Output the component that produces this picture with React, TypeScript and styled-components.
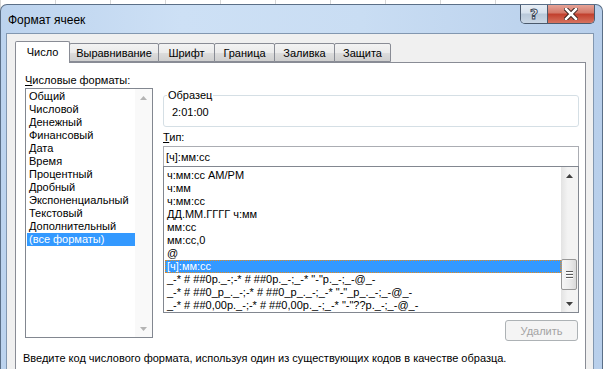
import React from "react";
import styled, { createGlobalStyle } from "styled-components";

const GlobalStyle = createGlobalStyle`
  html, body {
    margin: 0;
    padding: 0;
    overflow: hidden;
  }
  body {
    width: 605px;
    height: 369px;
    font-family: "Liberation Sans", Arial, sans-serif;
    font-size: 11px;
    color: #000;
    background: #fff
      repeating-linear-gradient(90deg, transparent 0 54px, #d6d6d6 54px 55px);
    background-position: 1px 0;
  }
`;

const Window = styled.div`
  margin-top: 4px;
  width: 603px;
  height: 365px;
  box-sizing: border-box;
  border: 1px solid #5b6f87;
  border-bottom: none;
  border-radius: 7px 7px 0 0;
  background: linear-gradient(
    90deg,
    #bcd3ee 0%,
    #cde0f5 30%,
    #c9ddf3 60%,
    #b8cfeb 100%
  );
  display: flex;
  flex-direction: column;
  overflow: hidden;
`;

const TitleBar = styled.div`
  height: 28px;
  flex: none;
  display: flex;
  align-items: center;
  padding-left: 7px;
`;

const Caption = styled.div`
  flex: 1;
  font-size: 12px;
  color: #000;
  padding-top: 1px;
`;

const CaptionButtons = styled.div`
  align-self: flex-start;
  margin-top: -1px;
  margin-right: 7px;
  display: flex;
  height: 19px;
  border: 1px solid #4b5a6d;
  border-top: none;
  border-radius: 0 0 5px 5px;
  overflow: hidden;
`;

const CaptionButton = styled.div<{ $close?: boolean; $w: number }>`
  width: ${(p) => p.$w}px;
  display: flex;
  align-items: center;
  justify-content: center;
  background: ${(p) =>
    p.$close
      ? "linear-gradient(180deg, #e8a89c 0%, #d47a6b 45%, #c2412f 55%, #d7735f 100%)"
      : "linear-gradient(180deg, #e9eff6 0%, #d7e2ee 45%, #b9c9da 55%, #cbd8e6 100%)"};
  & + & {
    border-left: 1px solid #4b5a6d;
  }
`;

const HelpGlyph = styled.span`
  font-family: "DejaVu Sans", sans-serif;
  font-weight: bold;
  font-size: 14px;
  color: #fff;
  -webkit-text-stroke: 1px #3d4a5a;
  line-height: 1;
`;

const Client = styled.div`
  flex: 1;
  margin: 0 8px 0 5px;
  background: #f0f0f0;
  border: 1px solid #8297b0;
  border-bottom: none;
  padding: 7px 7px 0 8px;
  display: flex;
  flex-direction: column;
`;

const TabStrip = styled.div`
  display: flex;
  align-items: flex-end;
  height: 21px;
  position: relative;
  z-index: 1;
`;

const Tab = styled.div<{ $active?: boolean; $w: number }>`
  width: ${(p) => p.$w}px;
  box-sizing: border-box;
  height: ${(p) => (p.$active ? 22 : 19)}px;
  margin-bottom: ${(p) => (p.$active ? -1 : 0)}px;
  border: 1px solid #898c95;
  border-bottom: ${(p) => (p.$active ? "none" : "1px solid #898c95")};
  border-radius: 2px 2px 0 0;
  background: ${(p) =>
    p.$active
      ? "#fff"
      : "linear-gradient(180deg, #f3f3f3 0%, #ebebeb 50%, #dddddd 51%, #cfcfcf 100%)"};
  display: flex;
  align-items: center;
  justify-content: center;
  padding-bottom: ${(p) => (p.$active ? 2 : 0)}px;
  & + & {
    margin-left: -1px;
  }
`;

const TabPanel = styled.div`
  flex: 1;
  border: 1px solid #898c95;
  border-bottom: none;
  background: #fff;
  padding: 11px 6px 0 9px;
  display: flex;
  flex-direction: column;
`;

const Columns = styled.div`
  display: flex;
  gap: 10px;
  align-items: flex-start;
`;

const LeftColumn = styled.div`
  width: 128px;
  display: flex;
  flex-direction: column;
`;

const RightColumn = styled.div`
  width: 416px;
  display: flex;
  flex-direction: column;
  padding-top: 15px;
`;

const Label = styled.div`
  height: 13px;
  line-height: 13px;
  margin-bottom: 1px;
`;

const ListBox = styled.div<{ $h: number }>`
  height: ${(p) => p.$h}px;
  box-sizing: border-box;
  border: 1px solid #828790;
  background: #fff;
  display: flex;
  overflow: hidden;
`;

const Items = styled.div<{ $pt: number }>`
  flex: 1;
  min-width: 0;
  padding: ${(p) => p.$pt}px 0 0 1px;
  overflow: hidden;
`;

const Item = styled.div<{ $selected?: boolean; $focus?: boolean }>`
  height: 13px;
  line-height: 13px;
  padding-left: 2px;
  white-space: nowrap;
  box-sizing: border-box;
  background: ${(p) => (p.$selected ? "#3399ff" : "transparent")};
  color: ${(p) => (p.$selected ? "#fff" : "#000")};
  outline: ${(p) => (p.$focus ? "1px dotted #e98b1a" : "none")};
  outline-offset: -1px;
`;

const ScrollBar = styled.div<{ $disabled?: boolean }>`
  width: 17px;
  flex: none;
  display: flex;
  flex-direction: column;
  background: ${(p) =>
    p.$disabled ? "#f9f9f9" : "linear-gradient(90deg, #e3e3e3 0%, #f3f3f3 40%, #f3f3f3 100%)"};
`;

const ArrowButton = styled.div`
  height: 17px;
  flex: none;
  display: flex;
  align-items: center;
  justify-content: center;
`;

const Track = styled.div`
  flex: 1;
  display: flex;
  flex-direction: column;
`;

const Thumb = styled.div<{ $top: number; $h: number }>`
  margin: ${(p) => p.$top}px 1px 0 0;
  height: ${(p) => p.$h}px;
  box-sizing: border-box;
  border: 1px solid #979797;
  border-radius: 2px;
  background: linear-gradient(90deg, #f5f5f5 0%, #ececec 50%, #dadada 100%);
  display: flex;
  flex-direction: column;
  align-items: center;
  justify-content: center;
  gap: 2px;
`;

const Grip = styled.div`
  width: 7px;
  height: 1px;
  background: #5a5a5a;
  box-shadow: 0 1px 0 #fff;
`;

const SampleBox = styled.fieldset`
  margin: 0;
  padding: 0 0 3px 8px;
  height: 38px;
  box-sizing: border-box;
  border: 1px solid #d5dfe5;
  border-radius: 3px;
`;

const Legend = styled.legend`
  padding: 0 1px;
  margin-left: -5px;
  line-height: 13px;
`;

const SampleValue = styled.div`
  margin-top: 4px;
  line-height: 13px;
`;

const TypeLabel = styled(Label)`
  margin-top: 4px;
  margin-bottom: 2px;
`;

const TextInput = styled.div`
  height: 20px;
  box-sizing: border-box;
  border: 1px solid #abadb3;
  border-bottom: none;
  padding-left: 2px;
  display: flex;
  align-items: center;
  background: #fff;
`;

const DeleteButton = styled.div`
  align-self: flex-end;
  margin: 7px 1px 0 0;
  width: 73px;
  height: 21px;
  box-sizing: border-box;
  border: 1px solid #adb2b5;
  border-radius: 3px;
  background: #f4f4f4;
  color: #a3a3a3;
  display: flex;
  align-items: center;
  justify-content: center;
`;

const Hint = styled.div`
  margin: 11px 0 0 -2px;
  line-height: 13px;
  white-space: nowrap;
`;

const Arrow = ({ up, color }: { up?: boolean; color: string }) => (
  <svg width="7" height="4" viewBox="0 0 7 4">
    <polygon points={up ? "0,4 7,4 3.5,0" : "0,0 7,0 3.5,4"} fill={color} />
  </svg>
);

const formats = [
  "Общий",
  "Числовой",
  "Денежный",
  "Финансовый",
  "Дата",
  "Время",
  "Процентный",
  "Дробный",
  "Экспоненциальный",
  "Текстовый",
  "Дополнительный",
  "(все форматы)",
];

const types = [
  "ч:мм:сс AM/PM",
  "ч:мм",
  "ч:мм:сс",
  "ДД.ММ.ГГГГ ч:мм",
  "мм:сс",
  "мм:сс,0",
  "@",
  "[ч]:мм:сс",
  '_-* # ##0р._-;-* # ##0р._-;_-* "-"р._-;_-@_-',
  '_-* # ##0_р_._-;-* # ##0_р_._-;_-* "-"_р_._-;_-@_-',
  '_-* # ##0,00р._-;-* # ##0,00р._-;_-* "-"??р._-;_-@_-',
];

const tabs = [
  { name: "Число", w: 55 },
  { name: "Выравнивание", w: 90 },
  { name: "Шрифт", w: 57 },
  { name: "Граница", w: 61 },
  { name: "Заливка", w: 61 },
  { name: "Защита", w: 57 },
];

const App: React.FC = () => {
  return (
    <>
      <GlobalStyle />
      <Window>
        <TitleBar>
          <Caption>Формат ячеек</Caption>
          <CaptionButtons>
            <CaptionButton $w={26}>
              <HelpGlyph>?</HelpGlyph>
            </CaptionButton>
            <CaptionButton $close $w={46}>
              <svg width="14" height="12" viewBox="0 0 14 12">
                <path
                  d="M2 1 L12 11 M12 1 L2 11"
                  stroke="#3b2420"
                  strokeWidth="4.5"
                  strokeLinecap="square"
                />
                <path
                  d="M2 1 L12 11 M12 1 L2 11"
                  stroke="#fff"
                  strokeWidth="2.5"
                  strokeLinecap="square"
                />
              </svg>
            </CaptionButton>
          </CaptionButtons>
        </TitleBar>
        <Client>
          <TabStrip>
            {tabs.map((t, i) => (
              <Tab key={t.name} $active={i === 0} $w={t.w}>
                {t.name}
              </Tab>
            ))}
          </TabStrip>
          <TabPanel>
            <Columns>
              <LeftColumn>
                <Label>
                  <u>Ч</u>исловые форматы:
                </Label>
                <ListBox $h={250}>
                  <Items $pt={1}>
                    {formats.map((f, i) => (
                      <Item key={f} $selected={i === formats.length - 1}>
                        {f}
                      </Item>
                    ))}
                  </Items>
                  <ScrollBar $disabled>
                    <ArrowButton>
                      <Arrow up color="#b4b4b4" />
                    </ArrowButton>
                    <Track />
                    <ArrowButton>
                      <Arrow color="#b4b4b4" />
                    </ArrowButton>
                  </ScrollBar>
                </ListBox>
              </LeftColumn>
              <RightColumn>
                <SampleBox>
                  <Legend>Образец</Legend>
                  <SampleValue>2:01:00</SampleValue>
                </SampleBox>
                <TypeLabel>
                  <u>Т</u>ип:
                </TypeLabel>
                <TextInput>[ч]:мм:сс</TextInput>
                <ListBox $h={147}>
                  <Items $pt={2}>
                    {types.map((t, i) => (
                      <Item key={t} $selected={i === 7} $focus={i === 7}>
                        {t}
                      </Item>
                    ))}
                  </Items>
                  <ScrollBar>
                    <ArrowButton>
                      <Arrow up color="#404040" />
                    </ArrowButton>
                    <Track>
                      <Thumb $top={75} $h={31}>
                        <Grip />
                        <Grip />
                        <Grip />
                      </Thumb>
                    </Track>
                    <ArrowButton>
                      <Arrow color="#404040" />
                    </ArrowButton>
                  </ScrollBar>
                </ListBox>
                <DeleteButton>Удалить</DeleteButton>
              </RightColumn>
            </Columns>
            <Hint>
              Введите код числового формата, используя один из существующих кодов в
              качестве образца.
            </Hint>
          </TabPanel>
        </Client>
      </Window>
    </>
  );
};

export default App;
